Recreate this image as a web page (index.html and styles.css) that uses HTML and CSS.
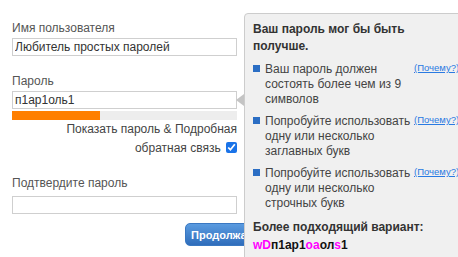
FILE: index.html
```html
<!DOCTYPE html>
<html lang="ru">
<head>
<meta charset="utf-8">
<link rel="stylesheet" href="styles.css">
</head>
<body>
<div class="page">
  <form class="form">
    <div class="group">
      <label class="label">Имя пользователя</label>
      <input class="field" type="text" value="Любитель простых паролей">
    </div>
    <div class="group">
      <label class="label">Пароль</label>
      <input class="field" type="text" value="п1ар1оль1">
      <div class="meter"><div class="meter-fill" style="width:39%"></div></div>
      <div class="show">Показать пароль &amp; Подробная обратная связь <input class="check" type="checkbox" checked></div>
    </div>
    <div class="group confirm">
      <label class="label">Подтвердите пароль</label>
      <input class="field" type="password">
    </div>
    <div class="actions">
      <button class="btn" type="button">Продолжать</button>
    </div>
  </form>

  <div class="popup">
    <span class="arrow"></span>
    <div class="title">Ваш пароль мог бы быть получше.</div>
    <ul class="tips">
      <li class="tip"><span class="bullet"></span><span class="tip-text">Ваш пароль должен состоять более чем из 9 символов</span><a class="why" href="#">(Почему?)</a></li>
      <li class="tip"><span class="bullet"></span><span class="tip-text">Попробуйте использовать одну или несколько заглавных букв</span><a class="why" href="#">(Почему?)</a></li>
      <li class="tip"><span class="bullet"></span><span class="tip-text">Попробуйте использовать одну или несколько строчных букв</span><a class="why" href="#">(Почему?)</a></li>
    </ul>
    <div class="better">Более подходящий вариант:</div>
    <div class="suggest"><span class="hl">wD</span>п1ар1<span class="hl">оа</span>ол<span class="hl">s</span>1</div>
  </div>
</div>
</body>
</html>
```

FILE: styles.css
```css
html, body {
  margin: 0;
  padding: 0;
  background: #fff;
  overflow: hidden;
}
body {
  width: 458px;
  height: 257px;
  font-family: "Liberation Sans", Arial, sans-serif;
  font-size: 12px;
  color: #333;
}
.page {
  position: relative;
  width: 458px;
  height: 257px;
  overflow: hidden;
}
.form {
  width: 225px;
  margin: 0 0 0 12px;
  padding-top: 21px;
  display: flex;
  flex-direction: column;
}
.group {
  display: flex;
  flex-direction: column;
  margin-bottom: 18px;
}
.label {
  display: block;
  line-height: 15px;
  color: #555;
  margin-bottom: 2px;
}
.confirm {
  margin-bottom: 9px;
}
.confirm .label {
  margin-bottom: 5px;
}
.field {
  box-sizing: border-box;
  width: 225px;
  height: 18px;
  margin: 0;
  padding: 0 2px;
  border: 1px solid #cfcfcf;
  font-family: "Liberation Sans", Arial, sans-serif;
  font-size: 12px;
  color: #333;
  background: #fff;
  outline: none;
}
.meter {
  margin-top: 2px;
  height: 9px;
  background: #ededed;
}
.meter-fill {
  height: 100%;
  background: #ff7f00;
}
.show {
  text-align: right;
  line-height: 19px;
  color: #444;
  margin-top: 0;
}
.check {
  width: 11px;
  height: 11px;
  margin: 0 0 0 2px;
  vertical-align: -1px;
  accent-color: #1a73e8;
}
.actions {
  display: flex;
  padding-left: 173px;
}
.btn {
  height: 23px;
  width: 100px;
  padding: 0 0 0 5px;
  text-align: left;
  border: 1px solid #3a78c2;
  border-radius: 5px;
  background: linear-gradient(#5a9be0, #2f6dbb);
  color: #fff;
  font-family: "Liberation Sans", Arial, sans-serif;
  font-size: 11px;
  font-weight: bold;
}
.popup {
  position: absolute;
  left: 244px;
  top: 13px;
  width: 240px;
  height: 270px;
  box-sizing: border-box;
  padding: 7px 0 0 8px;
  background: #f0f0f0;
  border: 1px solid #cccccc;
  border-radius: 4px;
}
.arrow {
  position: absolute;
  left: -9px;
  top: 80px;
  width: 0;
  height: 0;
  border-top: 6px solid transparent;
  border-bottom: 6px solid transparent;
  border-right: 8px solid #c4c4c4;
}
.title {
  width: 175px;
  font-weight: bold;
  line-height: 17px;
  color: #333;
}
.tips {
  list-style: none;
  margin: 7px 0 0 0;
  padding: 0;
}
.tip {
  display: flex;
  align-items: flex-start;
  line-height: 15px;
  color: #444;
  margin-bottom: 7px;
}
.bullet {
  flex: none;
  width: 7px;
  height: 7px;
  margin: 3px 5px 0 0;
  background: #2b6ec4;
}
.tip-text {
  flex: none;
  width: 146px;
}
.why {
  flex: none;
  margin-left: 3px;
  font-size: 9.5px;
  line-height: 12px;
  color: #2a7ae2;
  text-decoration: underline;
}
.better {
  margin-top: 4px;
  font-weight: bold;
  line-height: 18px;
  color: #333;
}
.suggest {
  font-weight: bold;
  line-height: 18px;
  color: #111;
}
.hl {
  color: #ff00ff;
}
```
